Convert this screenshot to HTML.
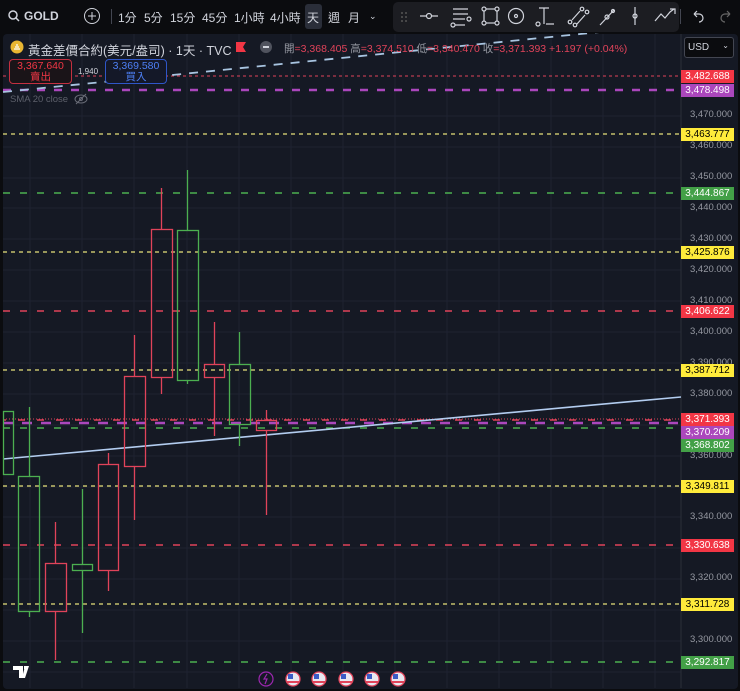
<!DOCTYPE html>
<html><head><meta charset="utf-8"><style>
*{margin:0;padding:0;box-sizing:border-box}
body{width:740px;height:691px;background:#0b0c0f;overflow:hidden;font-family:"Liberation Sans","Noto Sans CJK TC",sans-serif;position:relative;color:#d1d4dc}
.tb{position:absolute;top:0;left:0;width:740px;height:33px;background:#0b0c0f}
.t{position:absolute;top:9px;font-size:12px;color:#d1d4dc}
.ax{position:absolute;left:681px;width:53px;height:13px;font-size:10px;line-height:13px;text-align:center;color:#000}
.ax.w{color:#fff}
.pl{position:absolute;left:690px;font-size:9.5px;color:#9598a1}
</style></head><body>
<div class="tb">
<svg style="position:absolute;left:8px;top:10px" width="12" height="12"><circle cx="5" cy="5" r="4" stroke="#d1d4dc" stroke-width="1.5" fill="none"/><line x1="8" y1="8" x2="11" y2="11" stroke="#d1d4dc" stroke-width="1.5"/></svg>
<div class="t" style="left:24px;font-weight:bold">GOLD</div>
<svg style="position:absolute;left:83px;top:7px" width="18" height="18"><circle cx="9" cy="9" r="7.5" stroke="#d1d4dc" fill="none"/><path d="M9 5v8M5 9h8" stroke="#d1d4dc"/></svg>
<div style="position:absolute;left:111px;top:9px;width:1px;height:15px;background:#434651"></div>
<div class="t" style="left:118px">1分</div><div class="t" style="left:144px">5分</div><div class="t" style="left:170px">15分</div><div class="t" style="left:202px">45分</div><div class="t" style="left:234px">1小時</div><div class="t" style="left:270px">4小時</div>
<div style="position:absolute;left:305px;top:4px;width:17px;height:25px;background:#2a2e39;border-radius:3px"></div>
<div class="t" style="left:307px">天</div><div class="t" style="left:328px">週</div><div class="t" style="left:348px">月</div>
<div class="t" style="left:369px;font-size:9px;top:11px">⌄</div>
<div style="position:absolute;left:393px;top:2px;width:286px;height:30px;background:#1c1d22;border-radius:5px"></div>
<svg style="position:absolute;left:393px;top:2px" width="286" height="30" fill="none" stroke="#d1d4dc" stroke-width="1.2">
<g fill="#555" stroke="none"><circle cx="9" cy="11" r="1"/><circle cx="13" cy="11" r="1"/><circle cx="9" cy="15" r="1"/><circle cx="13" cy="15" r="1"/><circle cx="9" cy="19" r="1"/><circle cx="13" cy="19" r="1"/></g>
<path d="M27 14h6M39 14h6"/><circle cx="36" cy="14" r="2.5"/>
<path d="M60 7h15M60 12h15M60 17h12M62 23h10"/><circle cx="76" cy="17" r="2"/><circle cx="60" cy="23" r="2"/>
<rect x="91" y="7" width="13" height="14"/><circle cx="91" cy="7" r="2" fill="#1c1d22"/><circle cx="104" cy="7" r="2" fill="#1c1d22"/><circle cx="91" cy="21" r="2" fill="#1c1d22"/><circle cx="104" cy="21" r="2" fill="#1c1d22"/>
<circle cx="123" cy="14" r="7.5"/><circle cx="123" cy="14" r="1.5"/>
<path d="M146 6h10M151 6v16M153 22h8"/><circle cx="145" cy="22" r="2"/>
<path d="M179 18l8-9M184 22l8-9"/><circle cx="177" cy="20" r="1.8"/><circle cx="189" cy="7" r="1.8"/><circle cx="182" cy="23" r="1.8"/><circle cx="194" cy="10" r="1.8"/>
<path d="M207 23l14-15"/><circle cx="214" cy="15" r="2"/><circle cx="220" cy="9" r="1.5"/>
<path d="M242 5v18"/><circle cx="242" cy="14" r="2"/>
<path d="M262 19l6-7 4 4 5-6 4-3M277 7h5v5"/>
</svg>
<div style="position:absolute;left:680px;top:9px;width:1px;height:15px;background:#434651"></div>
<svg style="position:absolute;left:690px;top:9px" width="45" height="14" fill="none" stroke="#d1d4dc" stroke-width="1.2"><path d="M4 5h5a4 4 0 0 1 0 8M4 5l3-3M4 5l3 3"/><path d="M40 5h-5a4 4 0 0 0 0 8M40 5l-3-3M40 5l-3 3" stroke="#666"/></svg>
</div>

<svg style="position:absolute;left:0;top:33px" width="740" height="658">
<rect x="3" y="1" width="735" height="655" rx="4" fill="#151924"/>
<g transform="translate(0,-33)">
<g stroke="#1f2331" stroke-width="1">
<path d="M30 34V688M82 34V688M134 34V688M187 34V688M239 34V688M291 34V688M343 34V688M395 34V688M447 34V688M499 34V688M551 34V688M603 34V688M655 34V688"/>
<path d="M3 116H681M3 147H681M3 178H681M3 208H681M3 239H681M3 270H681M3 301H681M3 332H681M3 363H681M3 394H681M3 425H681M3 456H681M3 487H681M3 517H681M3 548H681M3 579H681M3 610H681M3 641H681M3 672H681"/>
</g>
<line x1="681" y1="34" x2="681" y2="688" stroke="#2a2e39"/>
<g fill="none" stroke-width="1.2">
<line x1="3" y1="76" x2="681" y2="76" stroke="#e0435a" stroke-dasharray="3 3" stroke-width="1"/>
<line x1="3" y1="90" x2="681" y2="90" stroke="#ab47bc" stroke-dasharray="8 9" stroke-width="2.5"/>
<line x1="3" y1="134" x2="681" y2="134" stroke="#e8e27a" stroke-dasharray="4 4"/>
<line x1="3" y1="193" x2="681" y2="193" stroke="#4caf50" stroke-dasharray="7 10" stroke-width="1.5"/>
<line x1="3" y1="252" x2="681" y2="252" stroke="#e8e27a" stroke-dasharray="4 4"/>
<line x1="3" y1="311" x2="681" y2="311" stroke="#e0435a" stroke-dasharray="7 10" stroke-width="1.5"/>
<line x1="3" y1="370" x2="681" y2="370" stroke="#e8e27a" stroke-dasharray="4 4"/>
<line x1="3" y1="419" x2="681" y2="419" stroke="#e0435a" stroke-dasharray="1 2" stroke-width="1"/>
<line x1="3" y1="420" x2="681" y2="420" stroke="#e0435a" stroke-dasharray="7 12" stroke-width="1.5" stroke-dashoffset="4"/>
<line x1="3" y1="423" x2="681" y2="423" stroke="#ab47bc" stroke-dasharray="10 9" stroke-width="2.5"/>
<line x1="3" y1="428" x2="681" y2="428" stroke="#4caf50" stroke-dasharray="7 10" stroke-width="1.5"/>
<line x1="3" y1="486" x2="681" y2="486" stroke="#e8e27a" stroke-dasharray="4 4"/>
<line x1="3" y1="545" x2="681" y2="545" stroke="#e0435a" stroke-dasharray="7 10" stroke-width="1.5"/>
<line x1="3" y1="604" x2="681" y2="604" stroke="#e8e27a" stroke-dasharray="4 4"/>
<line x1="3" y1="662" x2="681" y2="662" stroke="#4caf50" stroke-dasharray="7 10" stroke-width="1.5"/>
<line x1="3" y1="92" x2="620" y2="30" stroke="#a8c4e0" stroke-dasharray="9 8" stroke-width="1.8"/>
<line x1="3" y1="459" x2="681" y2="397" stroke="#b3cdf0" stroke-width="1.6"/>
</g>
<g fill="none" stroke-width="1.3">
<g stroke="#4caf50">
<rect x="3.5" y="411.5" width="10" height="63"/>
<path d="M29.5 407V476M29.5 612V617"/><rect x="18.5" y="476.5" width="21" height="135"/>
<path d="M82.5 489V564M82.5 570V633"/><rect x="72.5" y="564.5" width="20" height="6"/>
<path d="M187.5 170V230M187.5 380V384"/><rect x="177.5" y="230.5" width="21" height="150"/>
<path d="M239.5 332V364M239.5 424V446"/><rect x="229.5" y="364.5" width="21" height="60"/>
</g>
<g stroke="#e0435a">
<path d="M55.5 522V563M55.5 611V660"/><rect x="45.5" y="563.5" width="21" height="48"/>
<path d="M108.5 453V464M108.5 570V591"/><rect x="98.5" y="464.5" width="20" height="106"/>
<path d="M134.5 335V376M134.5 466V520"/><rect x="124.5" y="376.5" width="21" height="90"/>
<path d="M161.5 188V229M161.5 377V394"/><rect x="151.5" y="229.5" width="21" height="148"/>
<path d="M214.5 322V364M214.5 377V436"/><rect x="204.5" y="364.5" width="20" height="13"/>
<path d="M266.5 410V420M266.5 430V515"/><rect x="256.5" y="420.5" width="20" height="10"/>
</g>
</g>
<circle cx="266" cy="679" r="7" fill="none" stroke="#9c27b0" stroke-width="1.2"/><path d="M267 674l-3 5h3l-2 5" stroke="#9c27b0" fill="none" stroke-width="1.2"/>
<g stroke="#e0435a" stroke-width="1.3">
<circle cx="293" cy="679" r="7" fill="#e8e8f0"/><circle cx="319" cy="679" r="7" fill="#e8e8f0"/><circle cx="346" cy="679" r="7" fill="#e8e8f0"/><circle cx="372" cy="679" r="7" fill="#e8e8f0"/><circle cx="398" cy="679" r="7" fill="#e8e8f0"/>
</g>
<g fill="#3b5bc4"><rect x="288" y="674" width="5" height="5"/><rect x="314" y="674" width="5" height="5"/><rect x="341" y="674" width="5" height="5"/><rect x="367" y="674" width="5" height="5"/><rect x="393" y="674" width="5" height="5"/></g>
<g fill="#e0435a"><rect x="287" y="681" width="12" height="2"/><rect x="313" y="681" width="12" height="2"/><rect x="340" y="681" width="12" height="2"/><rect x="366" y="681" width="12" height="2"/><rect x="392" y="681" width="12" height="2"/></g>
<path d="M13 666h10v12h-4v-8h-6z M25 666h4l-4 12h-3z" fill="#fff"/>
<rect x="24" y="666" width="3" height="3" fill="#fff"/>
</g>
</svg>

<svg style="position:absolute;left:10px;top:40px" width="14" height="14"><circle cx="7" cy="7" r="6.5" fill="#e9b632"/><path d="M4 9h6M5 7h4M6 5h2" stroke="#fff" stroke-width="1.2"/></svg>
<div style="position:absolute;left:28px;top:40px;font-size:12.5px;color:#d1d4dc;white-space:nowrap">黃金差價合約(美元/盎司) · 1天 · TVC</div>
<div style="position:absolute;left:236px;top:42px;width:10px;height:10px;background:#f23645;clip-path:polygon(0 0,100% 0,70% 50%,100% 100%,0 100%)"></div>
<div style="position:absolute;left:260px;top:41px;width:12px;height:12px;border-radius:6px;background:#50535e"><div style="margin:5px 3px;height:2px;background:#d1d4dc"></div></div>
<div style="position:absolute;left:284px;top:41px;font-size:10.5px;color:#e0435a;white-space:nowrap"><span style="color:#9598a1">開</span>=3,368.405 <span style="color:#9598a1">高</span>=3,374.510 <span style="color:#9598a1">低</span>=3,340.470 <span style="color:#9598a1">收</span>=3,371.393 +1.197 (+0.04%)</div>
<div style="position:absolute;left:684px;top:37px;width:50px;height:21px;border:1px solid #434651;border-radius:3px;font-size:10px;padding:4px 0 0 3px;color:#d1d4dc;background:#0b0c0f">USD<span style="position:absolute;right:4px;top:3px;font-size:8px">⌄</span></div>
<div style="position:absolute;left:9px;top:59px;width:63px;height:25px;border:1px solid #c43040;border-radius:4px;background:#1a1418;text-align:center;font-size:10.5px;line-height:11px;color:#f23645;padding-top:1px">3,367.640<br>賣出</div>
<div style="position:absolute;left:78px;top:67px;font-size:8px;color:#d1d4dc">1,940</div>
<div style="position:absolute;left:105px;top:59px;width:62px;height:25px;border:1px solid #2f56c8;border-radius:4px;background:#141828;text-align:center;font-size:10.5px;line-height:11px;color:#4d7ff5;padding-top:1px">3,369.580<br>買入</div>
<div style="position:absolute;left:10px;top:94px;font-size:9.5px;color:#5d606b">SMA 20 close</div>
<svg style="position:absolute;left:74px;top:93px" width="14" height="12" fill="none" stroke="#6a6d78"><ellipse cx="7" cy="6" rx="6" ry="4"/><circle cx="7" cy="6" r="1.5"/><line x1="2" y1="11" x2="12" y2="1"/></svg>

<div class="pl" style="top:109px">3,470.000</div>
<div class="pl" style="top:140px">3,460.000</div>
<div class="pl" style="top:171px">3,450.000</div>
<div class="pl" style="top:202px">3,440.000</div>
<div class="pl" style="top:233px">3,430.000</div>
<div class="pl" style="top:264px">3,420.000</div>
<div class="pl" style="top:295px">3,410.000</div>
<div class="pl" style="top:326px">3,400.000</div>
<div class="pl" style="top:357px">3,390.000</div>
<div class="pl" style="top:388px">3,380.000</div>
<div class="pl" style="top:450px">3,360.000</div>
<div class="pl" style="top:511px">3,340.000</div>
<div class="pl" style="top:572px">3,320.000</div>
<div class="pl" style="top:634px">3,300.000</div>

<div class="ax w" style="top:70px;background:#f23645">3,482.688</div>
<div class="ax w" style="top:84px;background:#ab47bc">3,478.498</div>
<div class="ax" style="top:128px;background:#ffeb3b">3,463.777</div>
<div class="ax w" style="top:187px;background:#43a047">3,444.867</div>
<div class="ax" style="top:246px;background:#ffeb3b">3,425.876</div>
<div class="ax w" style="top:305px;background:#f23645">3,406.622</div>
<div class="ax" style="top:364px;background:#ffeb3b">3,387.712</div>
<div class="ax w" style="top:413px;background:#f23645">3,371.393</div>
<div class="ax w" style="top:426px;background:#ab47bc">3,370.209</div>
<div class="ax w" style="top:439px;background:#43a047">3,368.802</div>
<div class="ax" style="top:480px;background:#ffeb3b">3,349.811</div>
<div class="ax w" style="top:539px;background:#f23645">3,330.638</div>
<div class="ax" style="top:598px;background:#ffeb3b">3,311.728</div>
<div class="ax w" style="top:656px;background:#43a047">3,292.817</div>
</body></html>
